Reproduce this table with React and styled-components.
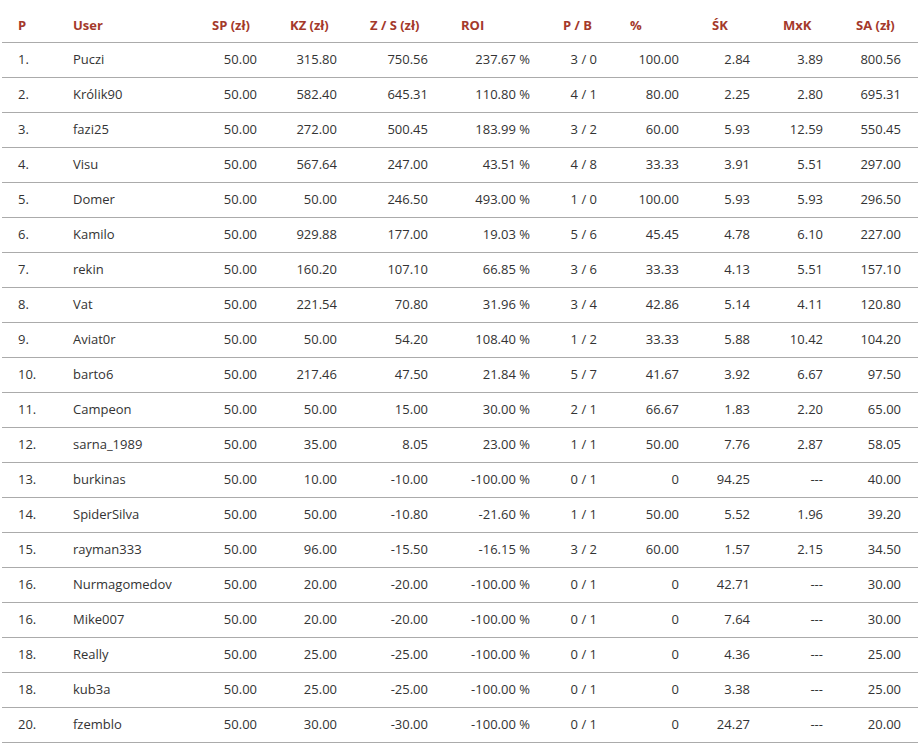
import React from 'react';
import styled, { createGlobalStyle } from 'styled-components';

const GlobalStyle = createGlobalStyle`
  html, body {
    margin: 0;
    padding: 0;
    background: #ffffff;
    overflow: hidden;
  }
  body {
    font-family: "Open Sans", "DejaVu Sans", sans-serif;
    color: #333333;
  }
`;

const Wrapper = styled.div`
  padding: 8px 0 0 2px;
`;

const Table = styled.table`
  border-collapse: collapse;
  table-layout: fixed;
  width: 916px;
  font-size: 13px;
`;

const HeadCell = styled.th`
  height: 34px;
  padding: 0 0 0 16px;
  text-align: left;
  font-weight: 700;
  color: #a4392b;
  border-bottom: 1px solid #ababab;
  white-space: nowrap;
  vertical-align: middle;
`;

const Row = styled.tr`
  height: 35px;
  border-bottom: 1px solid #ababab;
`;

const Cell = styled.td`
  height: 32px;
  padding: ${p => (p.$align === 'left' ? '0 0 2px 16px' : '0 17px 2px 0')};
  text-align: ${p => p.$align};
  vertical-align: middle;
  white-space: nowrap;
  color: #333333;
`;

const columns = [
  { label: 'P', width: 55, align: 'left' },
  { label: 'User', width: 139, align: 'left' },
  { label: 'SP (zł)', width: 78, align: 'right' },
  { label: 'KZ (zł)', width: 80, align: 'right' },
  { label: 'Z / S (zł)', width: 91, align: 'right' },
  { label: 'ROI', width: 102, align: 'right' },
  { label: 'P / B', width: 67, align: 'right' },
  { label: '%', width: 82, align: 'right' },
  { label: 'ŚK', width: 71, align: 'right' },
  { label: 'MxK', width: 73, align: 'right' },
  { label: 'SA (zł)', width: 78, align: 'right' },
];

const rows = [
  ['1.', 'Puczi', '50.00', '315.80', '750.56', '237.67 %', '3 / 0', '100.00', '2.84', '3.89', '800.56'],
  ['2.', 'Królik90', '50.00', '582.40', '645.31', '110.80 %', '4 / 1', '80.00', '2.25', '2.80', '695.31'],
  ['3.', 'fazi25', '50.00', '272.00', '500.45', '183.99 %', '3 / 2', '60.00', '5.93', '12.59', '550.45'],
  ['4.', 'Visu', '50.00', '567.64', '247.00', '43.51 %', '4 / 8', '33.33', '3.91', '5.51', '297.00'],
  ['5.', 'Domer', '50.00', '50.00', '246.50', '493.00 %', '1 / 0', '100.00', '5.93', '5.93', '296.50'],
  ['6.', 'Kamilo', '50.00', '929.88', '177.00', '19.03 %', '5 / 6', '45.45', '4.78', '6.10', '227.00'],
  ['7.', 'rekin', '50.00', '160.20', '107.10', '66.85 %', '3 / 6', '33.33', '4.13', '5.51', '157.10'],
  ['8.', 'Vat', '50.00', '221.54', '70.80', '31.96 %', '3 / 4', '42.86', '5.14', '4.11', '120.80'],
  ['9.', 'Aviat0r', '50.00', '50.00', '54.20', '108.40 %', '1 / 2', '33.33', '5.88', '10.42', '104.20'],
  ['10.', 'barto6', '50.00', '217.46', '47.50', '21.84 %', '5 / 7', '41.67', '3.92', '6.67', '97.50'],
  ['11.', 'Campeon', '50.00', '50.00', '15.00', '30.00 %', '2 / 1', '66.67', '1.83', '2.20', '65.00'],
  ['12.', 'sarna_1989', '50.00', '35.00', '8.05', '23.00 %', '1 / 1', '50.00', '7.76', '2.87', '58.05'],
  ['13.', 'burkinas', '50.00', '10.00', '-10.00', '-100.00 %', '0 / 1', '0', '94.25', '---', '40.00'],
  ['14.', 'SpiderSilva', '50.00', '50.00', '-10.80', '-21.60 %', '1 / 1', '50.00', '5.52', '1.96', '39.20'],
  ['15.', 'rayman333', '50.00', '96.00', '-15.50', '-16.15 %', '3 / 2', '60.00', '1.57', '2.15', '34.50'],
  ['16.', 'Nurmagomedov', '50.00', '20.00', '-20.00', '-100.00 %', '0 / 1', '0', '42.71', '---', '30.00'],
  ['16.', 'Mike007', '50.00', '20.00', '-20.00', '-100.00 %', '0 / 1', '0', '7.64', '---', '30.00'],
  ['18.', 'Really', '50.00', '25.00', '-25.00', '-100.00 %', '0 / 1', '0', '4.36', '---', '25.00'],
  ['18.', 'kub3a', '50.00', '25.00', '-25.00', '-100.00 %', '0 / 1', '0', '3.38', '---', '25.00'],
  ['20.', 'fzemblo', '50.00', '30.00', '-30.00', '-100.00 %', '0 / 1', '0', '24.27', '---', '20.00'],
];

const App = () => (
  <Wrapper>
    <GlobalStyle />
    <Table>
      <colgroup>
        {columns.map(col => (
          <col key={col.label} style={{ width: col.width }} />
        ))}
      </colgroup>
      <thead>
        <tr>
          {columns.map(col => (
            <HeadCell key={col.label}>{col.label}</HeadCell>
          ))}
        </tr>
      </thead>
      <tbody>
        {rows.map((row, i) => (
          <Row key={i}>
            {row.map((value, j) => (
              <Cell key={j} $align={columns[j].align}>
                {value}
              </Cell>
            ))}
          </Row>
        ))}
      </tbody>
    </Table>
  </Wrapper>
);

export default App;
